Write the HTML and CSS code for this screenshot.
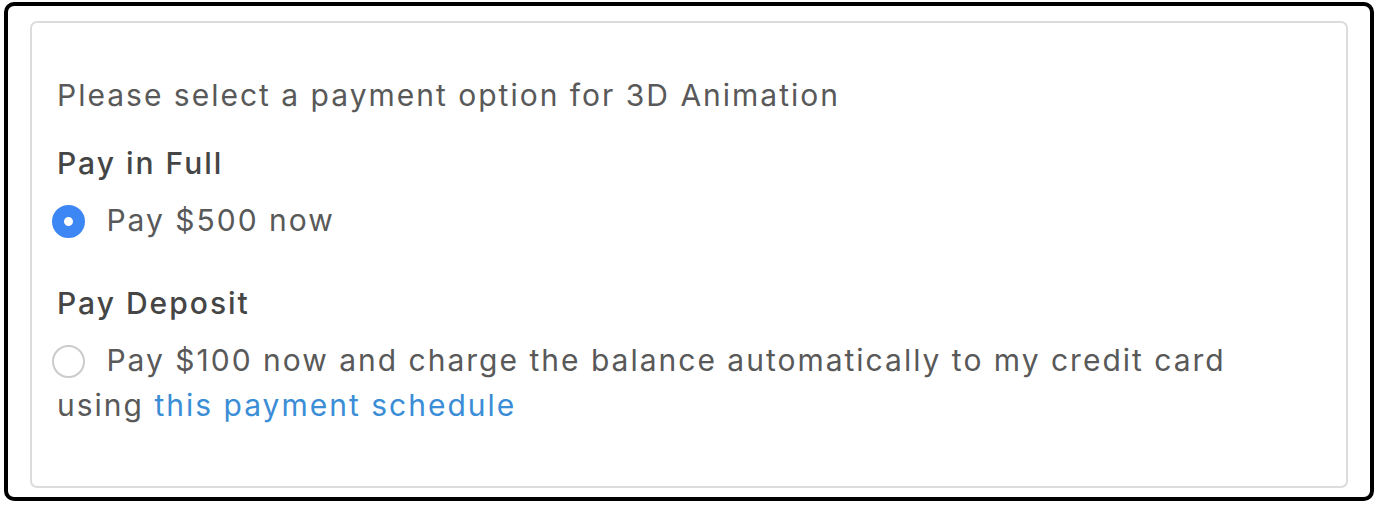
FILE: index.html
```html
<!DOCTYPE html>
<html lang="en">
<head>
  <meta charset="UTF-8" />
  <title>Payment Options</title>
  <link rel="stylesheet" href="styles.css">
</head>
<body>

  <div class="frame">
    <div class="payment-card">
      <p class="intro">Please select a payment option for 3D Animation</p>

      <div class="option-group">
        <h3 class="group-title">Pay in Full</h3>
        <label class="option">
          <input type="radio" name="payment" value="full" checked />
          Pay $500 now
        </label>
      </div>

      <div class="option-group">
        <h3 class="group-title">Pay Deposit</h3>
        <label class="option">
          <input type="radio" name="payment" value="deposit" />
          Pay $100 now and charge the balance automatically to my credit card
          using <a href="#">this payment schedule</a>
        </label>
      </div>
    </div>
  </div>

</body>
</html>
```

FILE: styles.css
```css
body {
  margin: 0;
  padding: 2px 6px 7px 4px;
  background: #fff;
  font-family: 'Inter', sans-serif;
  font-size: 30px;
  letter-spacing: 2px;
  line-height: 45px;
  color: #595959;
}

.frame {
  border: 4px solid #000;
  border-radius: 10px;
  padding: 15px 22px 9px 22px;
  height: 499px;
  box-sizing: border-box;
}

.payment-card {
  border: 2px solid #dcdcdc;
  border-radius: 7px;
  height: 100%;
  box-sizing: border-box;
  padding: 50px 24px 0 25px;
}

.intro {
  margin: 0 0 23px 0;
}

.option-group + .option-group {
  margin-top: 38px;
}

.group-title {
  margin: 0 0 12px 0;
  font-size: 30px;
  font-weight: 500;
  color: #454545;
}

.option {
  display: block;
  cursor: pointer;
}

.option input {
  appearance: none;
  -webkit-appearance: none;
  width: 33px;
  height: 33px;
  margin: 0 11px 0 -5px;
  border: 2px solid #cbcbcb;
  border-radius: 50%;
  background: #fff;
  vertical-align: -7px;
  box-sizing: border-box;
}

.option input:checked {
  border: 12px solid #3d87f5;
  background: #fff;
}

.option a {
  color: #3a8dd6;
  text-decoration: none;
}
```
